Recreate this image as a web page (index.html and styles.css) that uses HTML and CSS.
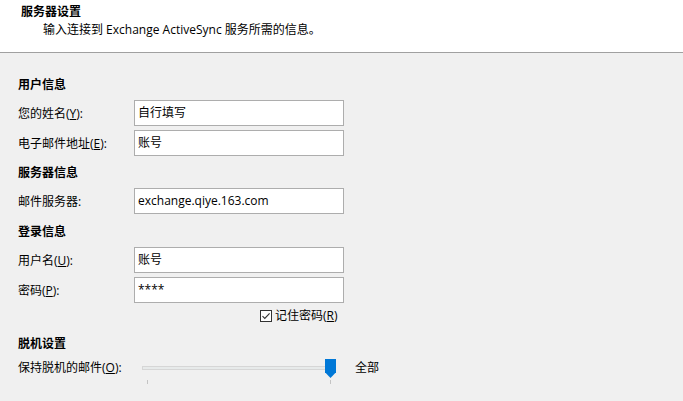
FILE: index.html
```html
<!DOCTYPE html>
<html lang="zh-CN">
<head>
    <meta charset="UTF-8">
    <title>服务器设置</title>
    <link rel="stylesheet" href="styles.css">
</head>
<body>
    <!-- 顶部说明 -->
    <div class="header">
        <div class="header-title">服务器设置</div>
        <div class="header-sub">输入连接到 Exchange ActiveSync 服务所需的信息。</div>
    </div>

    <div class="form">
        <div class="section first">用户信息</div>
        <div class="row">
            <label class="label">您的姓名(<u>Y</u>):</label>
            <div class="field">自行填写</div>
        </div>
        <div class="row">
            <label class="label">电子邮件地址(<u>E</u>):</label>
            <div class="field">账号</div>
        </div>

        <div class="section">服务器信息</div>
        <div class="row">
            <label class="label">邮件服务器:</label>
            <div class="field">exchange.qiye.163.com</div>
        </div>

        <div class="section login">登录信息</div>
        <div class="row">
            <label class="label">用户名(<u>U</u>):</label>
            <div class="field">账号</div>
        </div>
        <div class="row">
            <label class="label">密码(<u>P</u>):</label>
            <div class="field">****</div>
        </div>
        <div class="check-row">
            <svg class="checkbox" width="12" height="12" viewBox="0 0 12 12">
                <rect x="0.5" y="0.5" width="11" height="11" fill="#fff" stroke="#333"/>
                <path d="M2.5 6.2 L4.8 8.5 L9.6 3.4" fill="none" stroke="#333" stroke-width="1.1"/>
            </svg>
            <span>记住密码(<u>R</u>)</span>
        </div>

        <div class="section offline">脱机设置</div>
        <div class="slider-row">
            <label class="label slider-label">保持脱机的邮件(<u>O</u>):</label>
            <div class="slider">
                <div class="track"></div>
                <div class="thumb"></div>
                <div class="tick tick-start"></div>
                <div class="tick tick-end"></div>
            </div>
            <span class="slider-value">全部</span>
        </div>
    </div>
</body>
</html>
```

FILE: styles.css
```css
body {
    margin: 0;
    background-color: #f0f0f0;
    font-family: "Open Sans", "Noto Sans CJK SC", sans-serif;
    font-size: 12px;
    color: #000;
}

/* 顶部说明 */
.header {
    background-color: #fff;
    height: 53px;
    border-bottom: 1px solid #a0a0a0;
    box-sizing: border-box;
    padding-top: 3px;
}

.header-title {
    font-weight: bold;
    line-height: 18px;
    margin-left: 21px;
}

.header-sub {
    line-height: 18px;
    margin-left: 43px;
}

.form {
    padding-left: 18px;
}

.section {
    font-weight: bold;
    line-height: 16px;
    margin-top: 9px;
    margin-bottom: 7px;
}

.section.first {
    margin-top: 24px;
}

.section.login {
    margin-top: 10px;
}

.section.offline {
    margin-top: 12px;
    margin-bottom: 7px;
}

.row {
    display: flex;
    align-items: center;
    height: 26px;
    margin-bottom: 4px;
}

.label {
    width: 116px;
}

.field {
    width: 210px;
    height: 26px;
    box-sizing: border-box;
    background-color: #fff;
    border: 1px solid #adadad;
    padding: 0 3px;
    line-height: 24px;
}

.check-row {
    display: flex;
    align-items: center;
    gap: 3px;
    margin-left: 242px;
    margin-top: 5px;
    line-height: 16px;
}

.checkbox {
    display: block;
}

/* 滑块 */
.slider-row {
    display: flex;
    align-items: flex-start;
    height: 26px;
    line-height: 18px;
}

.slider-label {
    width: 124px;
}

.slider {
    position: relative;
    width: 194px;
    height: 26px;
}

.track {
    position: absolute;
    left: 0;
    top: 7px;
    width: 188px;
    height: 4px;
    box-sizing: border-box;
    background-color: #e7eaea;
    border: 1px solid #d6d6d6;
}

.thumb {
    position: absolute;
    left: 183px;
    top: 0;
    width: 11px;
    height: 19px;
    background-color: #0078d7;
    clip-path: polygon(0 0, 100% 0, 100% 70%, 50% 100%, 0 70%);
}

.tick {
    position: absolute;
    top: 21px;
    width: 1px;
    height: 4px;
    background-color: #c4c4c4;
}

.tick-start {
    left: 5px;
}

.tick-end {
    left: 188px;
}

.slider-value {
    margin-left: 19px;
}
```
